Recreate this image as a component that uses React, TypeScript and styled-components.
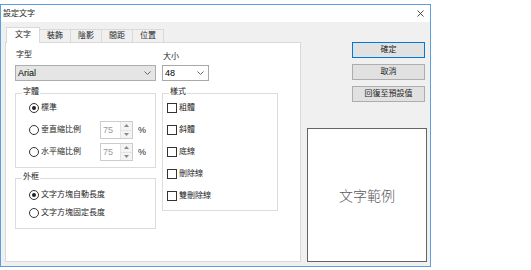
import React from "react";
import styled, { createGlobalStyle } from "styled-components";

const GlobalStyle = createGlobalStyle`
  html, body { margin: 0; padding: 0; background: #ffffff; }
  body {
    padding-top: 4px;
    font-family: "Liberation Sans", "Noto Sans CJK TC", sans-serif;
    font-size: 8px;
    color: #1e1e1e;
  }
  * { box-sizing: border-box; }
`;

const Window = styled.div`
  width: 431px;
  height: 263px;
  border: 1px solid #5b9fdc;
  background: #f0f0f0;
  display: flex;
  flex-direction: column;
`;

const TitleBar = styled.div`
  height: 17px;
  background: #ffffff;
  display: flex;
  align-items: center;
  justify-content: space-between;
  padding: 0 6px 0 2px;
  line-height: 10px;
`;

const Body = styled.div`
  flex: 1;
  display: flex;
  gap: 6px;
  padding: 5px 3px 4px 4px;
`;

const LeftCol = styled.div`
  width: 296px;
  display: flex;
  flex-direction: column;
`;

const TabStrip = styled.div`
  height: 15px;
  display: flex;
  align-items: flex-end;
  padding-left: 1px;
`;

const Tab = styled.div<{ $active?: boolean }>`
  position: relative;
  z-index: ${(p) => (p.$active ? 1 : 0)};
  height: ${(p) => (p.$active ? 16 : 13)}px;
  margin-bottom: ${(p) => (p.$active ? -1 : 0)}px;
  margin-left: ${(p) => (p.$active ? 0 : -1)}px;
  padding: 0 ${(p) => (p.$active ? 8 : 7)}px;
  background: ${(p) => (p.$active ? "#ffffff" : "#f0f0f0")};
  border: 1px solid #d9d9d9;
  border-bottom: none;
  display: flex;
  align-items: center;
  line-height: 10px;
  padding-bottom: ${(p) => (p.$active ? 2 : 0)}px;
`;

const Panel = styled.div`
  flex: 1;
  background: #ffffff;
  border: 1px solid #d9d9d9;
  padding: 7px 0 0 9px;
  display: flex;
  gap: 6px;
`;

const Column = styled.div<{ $width: number }>`
  width: ${(p) => p.$width}px;
  display: flex;
  flex-direction: column;
`;

const FieldLabel = styled.div<{ $offset?: number }>`
  height: 10px;
  line-height: 10px;
  margin-top: ${(p) => p.$offset ?? 0}px;
  margin-bottom: ${(p) => 5 - (p.$offset ?? 0)}px;
  padding-left: 1px;
`;

const Combo = styled.div<{ $width: number; $gray?: boolean }>`
  width: ${(p) => p.$width}px;
  height: 16px;
  background: ${(p) => (p.$gray ? "#e5e5e5" : "#ffffff")};
  border: 1px solid ${(p) => (p.$gray ? "#adadad" : "#a8a8a8")};
  display: flex;
  align-items: center;
  justify-content: space-between;
  padding: 0 4px 0 2px;
  font-size: 9px;
  color: #000;
`;

const Group = styled.div<{ $pad: string; $gap: number }>`
  position: relative;
  margin-top: 12px;
  border: 1px solid #dcdcdc;
  padding: ${(p) => p.$pad};
  display: flex;
  flex-direction: column;
  gap: ${(p) => p.$gap}px;
`;

const SecondGroup = styled(Group)`
  margin-top: 10px;
`;

const Legend = styled.div`
  position: absolute;
  top: -7px;
  left: 6px;
  padding: 0 1px;
  background: #ffffff;
  line-height: 10px;
`;

const RadioRow = styled.div<{ $height: number }>`
  height: ${(p) => p.$height}px;
  display: flex;
  align-items: center;
  gap: 2px;
`;

const RadioCircle = styled.span<{ $checked?: boolean }>`
  width: 10px;
  height: 10px;
  border-radius: 50%;
  border: 1px solid #333;
  background: #fff;
  display: flex;
  align-items: center;
  justify-content: center;
  flex: none;
  &::after {
    content: "";
    display: ${(p) => (p.$checked ? "block" : "none")};
    width: 4px;
    height: 4px;
    border-radius: 50%;
    background: #222;
  }
`;

const OptionText = styled.span<{ $width?: number }>`
  line-height: 10px;
  width: ${(p) => (p.$width ? `${p.$width}px` : "auto")};
  flex: none;
`;

const Spinner = styled.div`
  width: 33px;
  height: 18px;
  border: 1px solid #cccccc;
  display: flex;
  background: #fff;
`;

const SpinValue = styled.div`
  flex: 1;
  padding-left: 2px;
  display: flex;
  align-items: center;
  font-size: 9px;
  color: #9a9a9a;
`;

const SpinButtons = styled.div`
  width: 12px;
  display: flex;
  flex-direction: column;
  border-left: 1px solid #e3e3e3;
`;

const SpinButton = styled.div`
  flex: 1;
  display: flex;
  align-items: center;
  justify-content: center;
  background: #f4f4f4;
  & + & { border-top: 1px solid #e3e3e3; }
`;

const Percent = styled.span`
  margin-left: 3px;
  font-size: 9px;
  color: #222;
`;

const CheckRow = styled.div`
  height: 14px;
  display: flex;
  align-items: center;
  gap: 2px;
`;

const CheckBox = styled.span`
  width: 10px;
  height: 10px;
  border: 1px solid #333;
  background: #fff;
  flex: none;
`;

const RightCol = styled.div`
  width: 120px;
  display: flex;
  flex-direction: column;
  align-items: flex-end;
  gap: 6px;
  padding-top: 15px;
`;

const Button = styled.div<{ $primary?: boolean }>`
  width: 73px;
  height: 16px;
  margin-right: 2px;
  background: #e1e1e1;
  border: 1px solid ${(p) => (p.$primary ? "#0078d7" : "#adadad")};
  display: flex;
  align-items: center;
  justify-content: center;
  line-height: 10px;
  color: #1e1e1e;
`;

const Preview = styled.div`
  align-self: stretch;
  margin-top: 20px;
  height: 134px;
  border: 1px solid #646464;
  background: #ffffff;
  display: flex;
  align-items: center;
  justify-content: center;
  font-family: "Noto Sans CJK TC", sans-serif;
  font-size: 14px;
  font-weight: 300;
  color: #5a5a5a;
`;

const Chevron = () => (
  <svg width="7" height="4" viewBox="0 0 7 4">
    <polyline points="0.5,0.5 3.5,3.5 6.5,0.5" fill="none" stroke="#666" strokeWidth="1" />
  </svg>
);

const Triangle = ({ up }: { up?: boolean }) => (
  <svg width="5" height="3" viewBox="0 0 5 3">
    <polygon points={up ? "2.5,0 5,3 0,3" : "0,0 5,0 2.5,3"} fill="#8a8a8a" />
  </svg>
);

const CloseIcon = () => (
  <svg width="7" height="7" viewBox="0 0 7 7">
    <path d="M0.5 0.5 L6.5 6.5 M6.5 0.5 L0.5 6.5" stroke="#333" strokeWidth="0.9" />
  </svg>
);

const tabs = ["文字", "裝飾", "陰影", "間距", "位置"];
const styles = ["粗體", "斜體", "底線", "刪除線", "雙刪除線"];

export default function App() {
  return (
    <>
      <GlobalStyle />
      <Window>
        <TitleBar>
          <span>設定文字</span>
          <CloseIcon />
        </TitleBar>
        <Body>
          <LeftCol>
            <TabStrip>
              {tabs.map((t, i) => (
                <Tab key={t} $active={i === 0}>
                  {t}
                </Tab>
              ))}
            </TabStrip>
            <Panel>
              <Column $width={141}>
                <FieldLabel>字型</FieldLabel>
                <Combo $width={141} $gray>
                  <span>Arial</span>
                  <Chevron />
                </Combo>
                <Group $pad="5px 0 6px 13px" $gap={4}>
                  <Legend>字體</Legend>
                  <RadioRow $height={18}>
                    <RadioCircle $checked />
                    <OptionText>標準</OptionText>
                  </RadioRow>
                  <RadioRow $height={18}>
                    <RadioCircle />
                    <OptionText $width={57}>垂直縮比例</OptionText>
                    <Spinner>
                      <SpinValue>75</SpinValue>
                      <SpinButtons>
                        <SpinButton><Triangle up /></SpinButton>
                        <SpinButton><Triangle /></SpinButton>
                      </SpinButtons>
                    </Spinner>
                    <Percent>%</Percent>
                  </RadioRow>
                  <RadioRow $height={18}>
                    <RadioCircle />
                    <OptionText $width={57}>水平縮比例</OptionText>
                    <Spinner>
                      <SpinValue>75</SpinValue>
                      <SpinButtons>
                        <SpinButton><Triangle up /></SpinButton>
                        <SpinButton><Triangle /></SpinButton>
                      </SpinButtons>
                    </Spinner>
                    <Percent>%</Percent>
                  </RadioRow>
                </Group>
                <SecondGroup $pad="9px 0 8px 13px" $gap={4}>
                  <Legend>外框</Legend>
                  <RadioRow $height={14}>
                    <RadioCircle $checked />
                    <OptionText>文字方塊自動長度</OptionText>
                  </RadioRow>
                  <RadioRow $height={14}>
                    <RadioCircle />
                    <OptionText>文字方塊固定長度</OptionText>
                  </RadioRow>
                </SecondGroup>
              </Column>
              <Column $width={116}>
                <FieldLabel $offset={2}>大小</FieldLabel>
                <Combo $width={47}>
                  <span>48</span>
                  <Chevron />
                </Combo>
                <Group $pad="7px 0 7px 4px" $gap={8}>
                  <Legend>樣式</Legend>
                  {styles.map((s) => (
                    <CheckRow key={s}>
                      <CheckBox />
                      <OptionText>{s}</OptionText>
                    </CheckRow>
                  ))}
                </Group>
              </Column>
            </Panel>
          </LeftCol>
          <RightCol>
            <Button $primary>確定</Button>
            <Button>取消</Button>
            <Button>回復至預設值</Button>
            <Preview>文字範例</Preview>
          </RightCol>
        </Body>
      </Window>
    </>
  );
}
